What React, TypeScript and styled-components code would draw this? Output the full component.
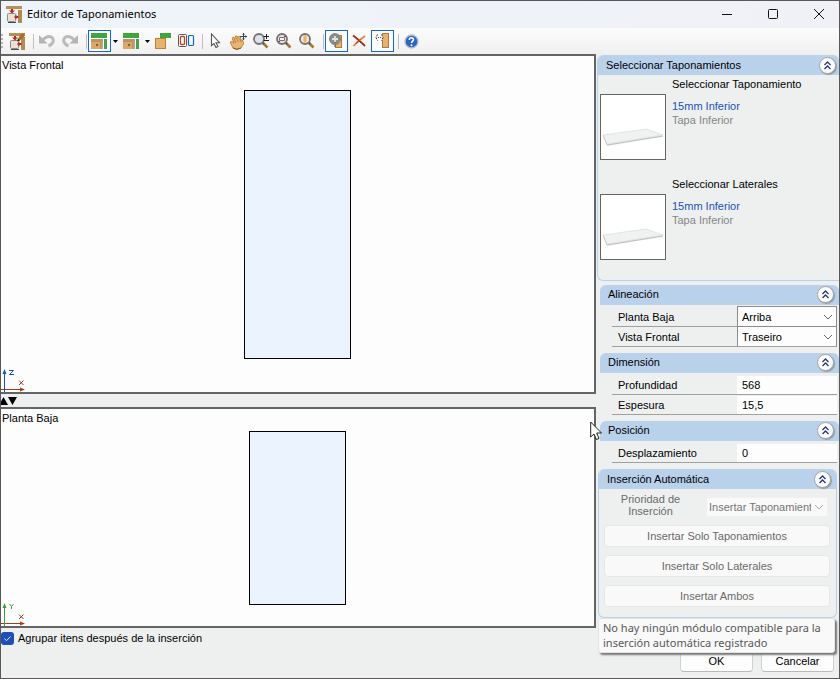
import React from 'react';
import styled, { createGlobalStyle, css } from 'styled-components';

const Global = createGlobalStyle`
  * { box-sizing: border-box; }
  html, body { margin: 0; padding: 0; }
  body, button, input, select {
    font-family: "Liberation Sans", Arial, sans-serif;
    font-size: 11px;
    line-height: 14px;
    color: #000;
  }
`;

const Window = styled.div`
  display: flex;
  flex-direction: column;
  min-height: 100vh;
  border: 1px solid #585858;
  background: #eef0f0;
  overflow: hidden;
`;

const TitleBar = styled.header`
  display: flex;
  align-items: center;
  height: 27px;
  padding: 0 0 1px 5px;
  background: linear-gradient(90deg, #eef4fb, #f0f1f7);
`;

const Title = styled.h1`
  flex: 1;
  margin: 0 0 0 5px;
  font: 400 11px/16px "Noto Sans", "Open Sans", sans-serif;
`;

const CaptionButton = styled.button`
  display: flex;
  align-items: center;
  justify-content: center;
  width: 46px;
  height: 26px;
  padding: 0;
  border: 0;
  background: none;
  &:last-child { margin-right: -3px; }
`;

const Toolbar = styled.div`
  display: flex;
  align-items: center;
  height: 26px;
  background: linear-gradient(#fcfcfc, #f0f0f0);
`;

const Grip = styled.span`
  width: 2px;
  height: 15px;
  margin-right: 2px;
  background: repeating-linear-gradient(#b4b4b4 0 2px, transparent 2px 4px);
`;

const ToolButton = styled.button<{ $active?: boolean }>`
  display: flex;
  align-items: center;
  justify-content: center;
  width: 23px;
  height: 22px;
  padding: 0;
  border: 1px solid ${p => (p.$active ? '#1467d2' : 'transparent')};
  background: ${p => (p.$active ? '#fafcff' : 'none')};
`;

const CaretButton = styled.button`
  display: flex;
  align-items: center;
  justify-content: center;
  width: 9px;
  height: 22px;
  padding: 0;
  border: 0;
  background: none;
`;

const ToolSeparator = styled.span<{ $lead?: boolean }>`
  width: 1px;
  height: 15px;
  margin: 0 1px 0 ${p => (p.$lead ? '5px' : '4px')};
  background: #bcc0c4;
`;

const Body = styled.main`
  display: flex;
  flex: 1;
`;

const Views = styled.div`
  display: flex;
  flex: 1;
  flex-direction: column;
`;

const View = styled.section<{ $grow: number }>`
  position: relative;
  display: flex;
  flex: ${p => p.$grow} 1 0;
  align-items: center;
  justify-content: center;
  padding-top: 1px;
  border: 2px solid #646464;
  border-left: 0;
  background: #fdfdfd;
`;

const ViewLabel = styled.h2`
  position: absolute;
  top: 2px;
  left: 1px;
  margin: 0;
  font-size: 11px;
  font-weight: 400;
`;

const AxisMark = styled.svg`
  position: absolute;
  bottom: 0;
  left: 0;
`;

const Splitter = styled.div`
  display: flex;
  align-items: center;
  height: 13px;
`;

const SplitButton = styled.button`
  display: flex;
  padding: 0;
  border: 0;
  background: none;
`;

const Sidebar = styled.aside`
  position: relative;
  display: flex;
  flex-direction: column;
  width: 243px;
  padding: 1px 0 0 1px;
`;

const GroupHeader = styled.header`
  display: flex;
  align-items: center;
  justify-content: space-between;
  height: 20px;
  padding: 0 5px 0 8px;
  border-radius: 6px 6px 0 0;
  background: #b9d1ea;
`;

const Group = styled.section<{ $kind: 'wide' | 'plain' | 'framed' }>`
  margin-bottom: 6px;
  ${p => p.$kind === 'wide' && css`
    height: 226px;
    margin-bottom: 4px;
    border-bottom: 1px solid #b9d1ea;
    border-left: 1px solid #b9d1ea;
    border-radius: 6px 0 0 6px;
    ${GroupHeader} { padding-right: 3px; }
  `}
  ${p => p.$kind === 'plain' && css`
    margin-left: 3px;
    ${GroupHeader} { padding-bottom: 2px; }
  `}
  ${p => p.$kind === 'framed' && css`
    margin: 0 2px 0 1px;
    border: 1px solid #b9d1ea;
    border-top: 0;
    border-radius: 6px;
  `}
`;

const GroupTitle = styled.h2`
  margin: 0;
  font-size: 11px;
  font-weight: 400;
`;

const CollapseButton = styled.button`
  display: flex;
  align-items: center;
  justify-content: center;
  width: 17px;
  height: 17px;
  padding: 0;
  border: 1px solid #a5a5a5;
  border-radius: 50%;
  background: #fdfdfd;
  box-shadow: 1px 1px 1px #8f99a5;
`;

const Material = styled.div`
  display: grid;
  grid-template-columns: 66px 1fr;
  grid-template-rows: 18px 66px;
  column-gap: 6px;
  height: 100px;
  padding-left: 2px;
`;

const MaterialTitle = styled.h3`
  grid-column: 2;
  margin: 2px 0 0;
  font-size: 11px;
  font-weight: 400;
`;

const Thumbnail = styled.button`
  display: flex;
  align-items: center;
  justify-content: center;
  margin-top: 1px;
  width: 66px;
  height: 66px;
  padding: 0;
  border: 1px solid #646464;
  background: #fff;
`;

const MaterialInfo = styled.div`
  display: flex;
  flex-direction: column;
  padding-top: 6px;
`;

const MaterialLink = styled.a`
  color: #1950c0;
  text-decoration: none;
`;

const MaterialKind = styled.span`
  color: #858585;
`;

const Rows = styled.div`
  padding: 2px 2px 0 12px;
`;

const Row = styled.div`
  display: grid;
  grid-template-columns: 1fr 100px;
  align-items: center;
  height: 20px;
  border-bottom: 1px solid #a0a0a0;
`;

const RowLabel = styled.label`
  padding: 1px 0 0 6px;
`;

const RowInput = styled.input`
  width: 100%;
  height: 18px;
  padding: 1px 5px 0;
  border: 0;
  background: #fdfdfd;
`;

const SelectBox = styled.div<{ $disabled?: boolean }>`
  display: grid;
  align-items: center;
  align-self: end;
  height: 20px;
  margin-top: -1px;
  border: 1px solid ${p => (p.$disabled ? '#f0f0f0' : '#8c8c8c')};
  border-bottom-width: ${p => (p.$disabled ? '1px' : '0')};
  background: ${p => (p.$disabled ? '#f9f9f9' : '#fdfdfd')};
  & > * { grid-area: 1 / 1; }
  & > svg { justify-self: end; margin-right: 3px; pointer-events: none; }
`;

const Select = styled.select<{ $narrow?: boolean }>`
  width: 100%;
  min-width: 0;
  height: 18px;
  padding: 0 ${p => (p.$narrow ? '16px' : '14px')} 0 ${p => (p.$narrow ? '2px' : '4px')};
  border: 0;
  appearance: none;
  background: none;
  &:disabled { color: #757575; opacity: 1; }
`;

const AutoBody = styled.div`
  display: flex;
  flex-direction: column;
  gap: 8px;
  padding: 4px 6px 10px 5px;
`;

const Priority = styled.div`
  display: grid;
  grid-template-columns: 93px 122px;
  justify-content: space-between;
  height: 24px;
  padding-right: 2px;
`;

const PriorityLabel = styled.label`
  padding: 0 12px;
  color: #6a6a6a;
  line-height: 12px;
  text-align: center;
`;

const WideButton = styled.button`
  height: 22px;
  padding: 0;
  border: 1px solid #e6e8e8;
  border-radius: 4px;
  background: #f9f9f9;
  &:disabled { color: #6a6a6a; }
`;

const Footer = styled.footer`
  position: relative;
  display: flex;
  justify-content: space-between;
  height: 50px;
  padding: 3px 5px 6px 0;
`;

const CheckLabel = styled.label`
  display: flex;
  align-items: center;
  align-self: flex-start;
  gap: 4px;
`;

const Checkbox = styled.input`
  appearance: none;
  width: 13px;
  height: 13px;
  margin: 0;
  border-radius: 3px;
  background: #1d4fb8;
  & + svg { margin-left: -17px; }
`;

const Actions = styled.div`
  display: flex;
  align-items: flex-end;
  gap: 8px;
`;

const DialogButton = styled.button`
  width: 73px;
  height: 23px;
  padding: 0;
  border: 1px solid #cfd1d1;
  border-bottom-color: #b9bbbb;
  border-radius: 4px;
  background: #fdfdfd;
`;

const Tooltip = styled.div`
  position: absolute;
  top: -10px;
  right: 4px;
  width: 237px;
  padding: 1px 4px 2px;
  border: 1px solid #e4e4e4;
  border-radius: 3px;
  background: #f9f9f9;
  box-shadow: 2px 2px 2px #777;
  color: #575757;
  font: 11px/15px "Noto Sans", "Open Sans", sans-serif;
  white-space: nowrap;
`;

const Pointer = styled.svg`
  position: absolute;
  top: 367px;
  left: -6px;
`;

const Drawing = styled.svg`
  display: block;
`;

const AppIcon = ({ pencil }: { pencil?: boolean }) => (
  <svg width="16" height="17" viewBox="0 0 16 17">
    <path d="M0 0H16V3H0z" fill="#b98f55" />
    <path d="M12 4H16V17H12z" fill="#b58a52" />
    <rect x="1.500" y="7.500" width="8" height="8" rx="1" fill="#e9e2d3" stroke="#8d8a83" />
    <path d="M2 16.500H10" stroke="#4c4a46" />
    <path d="M5 3H7V4.500H9L6 7.500L3 4.500H5z" fill="#b82a22" />
    <path d="M8 11L10.500 8.500V10H12.500V12H10.500V13.500z" fill="#b82a22" />
    {pencil && <path d="M9 6L11 2L14 0L16 2.500L13 6L10 8z" fill="#a9701f" />}
    {pencil && <path d="M8 8.500L9 5.500L11 7.500z" fill="#222" />}
  </svg>
);

const UndoIcon = ({ flip }: { flip?: boolean }) => (
  <svg width="16" height="14" viewBox="0 0 16 14">
    <g transform={flip ? 'matrix(-1 0 0 1 16 0)' : undefined}>
      <path d="M3 7C6 2.500 11 1 13.500 4C15.500 7 13.500 10.500 9.500 12" fill="none" stroke="#bababa" strokeWidth="3" />
      <path d="M0 1V9.500H8.500z" fill="#b4b4b4" />
    </g>
  </svg>
);

const CabinetIcon = () => (
  <svg width="17" height="16" viewBox="0 0 17 16">
    <path d="M0 0H16V5H0z" fill="#3fa53f" />
    <path d="M0 6H12V8H0z" fill="#b39575" />
    <path d="M10 8H12V16H10z" fill="#b9a48c" />
    <path d="M0 8H10V16H0z" fill="#dba666" />
    <path d="M0 8.500H9.500V16" fill="none" stroke="#c48f4e" />
    <rect x="5" y="11" width="2" height="2" fill="#8c5c2c" />
    <path d="M13 6H16V16H13z" fill="#49a049" />
  </svg>
);

const CornerIcon = () => (
  <svg width="17" height="16" viewBox="0 0 17 16">
    <rect x=".5" y="5.500" width="10" height="10" fill="#e5b271" stroke="#bd8035" />
    <path d="M5 0H16V5H5z" fill="#3fa53f" />
  </svg>
);

const PairIcon = () => (
  <svg width="17" height="14" viewBox="0 0 17 14" fill="none">
    <rect x=".5" y=".5" width="8" height="12" rx="1" fill="#fff" stroke="#5b5b5b" />
    <rect x="2.500" y="2.500" width="4" height="8" rx="1" stroke="#b9472b" strokeWidth="1.400" />
    <rect x="10.500" y="1.500" width="5" height="10" rx="1" fill="#f4f9ff" stroke="#1467d2" strokeWidth="1.200" />
  </svg>
);

const ArrowIcon = () => (
  <svg width="15" height="16" viewBox="0 0 15 16">
    <path d="M3.500 1V12.500L6 10.500L8 14.500L10 13.500L8 9.700H11.500z" fill="#fff" stroke="#555" strokeWidth="1.100" />
  </svg>
);

const HandIcon = () => (
  <svg width="18" height="17" viewBox="0 0 18 17">
    <path d="M1 11L0 9L2 8.500L4 10L2 5L3.500 4L5 6L5.500 3L7 3L8 5L9 3L10.500 4L11 7L13 7.500L13.500 11L11 15L7 16L3 15z" fill="#e8b672" stroke="#b57428" strokeWidth=".8" />
    <path d="M6 10L4 6M8.500 9L6.500 5M11 9L9.500 5.500" stroke="#a96822" strokeWidth=".7" />
    <path d="M3 15L7 16.500L11 15" fill="none" stroke="#8d5211" />
    <path d="M13.500 0V7M10 3.500H17" stroke="#34435c" />
    <path d="M12 1.500L13.500 0L15 1.500zM15.500 2L17 3.500L15.500 5zM12 5.500L13.500 7L15 5.500z" fill="#34435c" />
  </svg>
);

const LensIcon = ({ kind }: { kind: 'step' | 'window' | 'extents' }) => (
  <svg width="17" height="16" viewBox="0 0 17 16">
    <path d="M10 10L14.500 14.500" stroke="#a5753d" strokeWidth="2.600" />
    <path d="M9 9L11 11" stroke="#4e4e4e" strokeWidth="2" />
    <circle cx="6" cy="6" r="5" fill={kind === 'extents' ? '#f4e6d5' : '#dde4e9'} stroke="#747474" strokeWidth="1.800" />
    {kind === 'step' && <path d="M10.500 3.500H16M13.500 1V6M10.500 7.500H16" stroke="#222" />}
    {kind === 'window' && <path d="M3.500 4.500H8.500V7.500H3.500z" fill="#f4f4f4" stroke="#8b6a70" />}
    {kind === 'window' && <path d="M2 8.500H4M8 3.500H10" stroke="#c03030" />}
    {kind === 'extents' && <path d="M4.500 2.500H7.500V9.500H4.500z" fill="#efb068" />}
  </svg>
);

const InsertIcon = () => (
  <svg width="15" height="16" viewBox="0 0 15 16">
    <rect x="6.500" y="2.500" width="6" height="12" fill="#e5b271" stroke="#b57a2c" />
    <circle cx="6" cy="6" r="5.500" fill="#8b8f8b" stroke="#757875" strokeWidth=".8" />
    <path d="M6 3V9M3 6H9" stroke="#dfe4df" strokeWidth="1.800" />
    <path d="M6 14V12M6 10.500V9" stroke="#555" />
  </svg>
);

const DeleteIcon = () => (
  <svg width="15" height="14" viewBox="0 0 15 14">
    <path d="M1 1.500Q6 5 13 12" fill="none" stroke="#9a3419" strokeWidth="1.800" />
    <path d="M13 2Q7 6 1.500 12" fill="none" stroke="#e0823c" strokeWidth="1.800" />
    <path d="M4 4L9 9M8 5.500L4 9.500" stroke="#9c2b12" />
  </svg>
);

const ReplaceIcon = () => (
  <svg width="15" height="16" viewBox="0 0 15 16">
    <rect x="7.500" y=".5" width="6" height="14" fill="#e5b271" stroke="#b57a2c" />
    <circle cx="4.500" cy="4.500" r="3.500" fill="#f8f8f8" />
    <path d="M2.500 1.500L1 4.500L2.500 7.500M6.500 1.500L8 4.500L6.500 7.500" fill="none" stroke="#333" strokeDasharray="2 1" />
    <path d="M3 4.500H6" stroke="#555" strokeDasharray="1 1" />
  </svg>
);

const HelpIcon = () => (
  <svg width="15" height="15" viewBox="0 0 15 15">
    <circle cx="7.500" cy="7.500" r="6.500" fill="#2766c6" stroke="#b4bfcb" strokeWidth="1.400" />
    <path d="M5.300 6C5.300 3 9.700 3.200 9.500 5.700C9.400 7 7.500 7.200 7.500 9" fill="none" stroke="#fff" strokeWidth="1.600" />
    <circle cx="7.500" cy="11.200" r="1" fill="#fff" />
  </svg>
);

const Caret = () => (
  <CaretButton aria-label="Más opciones">
    <svg width="5" height="3" viewBox="0 0 5 3"><path d="M0 0H5L2.500 3z" /></svg>
  </CaretButton>
);

const PanelPicture = () => (
  <svg width="64" height="64" viewBox="0 0 64 64">
    <path d="M2 40L45 34L62 40L61 42L7 51L6 49z" fill="#eceded" />
    <path d="M2 40L45 34L62 40L6 49z" fill="#f0f1f1" stroke="#dcdede" strokeWidth=".7" />
    <path d="M6 50L62 41" stroke="#bfc1c1" />
    <path d="M2 40L6 50" stroke="#c8caca" />
  </svg>
);

const Axes = ({ letter, color }: { letter: string; color: string }) => (
  <AxisMark width="26" height="26" viewBox="0 0 26 26">
    <path d="M0 23.500H20" stroke="#a33b1c" />
    <path d="M19 21.500L24 23.500L19 25.500z" fill="#a33b1c" />
    <path d="M3.500 6V26" stroke={color} />
    <path d="M1.500 8L3.500 3L5.500 8z" fill={color} />
    <path d={letter === 'Z' ? 'M8 4.500H12.500L8.500 8.500H13' : 'M8.500 4L10.500 6.500V9M12.500 4L10.500 6.500'} fill="none" stroke={color} />
    <path d="M18 14.500L22.500 19M22.500 14.500L18 19" stroke="#8c3a24" />
  </AxisMark>
);

const Chevron = ({ pale }: { pale?: boolean }) => (
  <svg width="10" height="6" viewBox="0 0 10 6">
    <path d="M1 1L5 5L9 1" fill="none" stroke={pale ? '#aaa' : '#666'} />
  </svg>
);

type GroupPanelProps = { title: string; kind: 'wide' | 'plain' | 'framed'; children: React.ReactNode };

const GroupPanel = ({ title, kind, children }: GroupPanelProps) => (
  <Group $kind={kind}>
    <GroupHeader>
      <GroupTitle>{title}</GroupTitle>
      <CollapseButton aria-label={`Contraer ${title}`}>
        <svg width="9" height="9" viewBox="0 0 9 9">
          <path d="M1.500 4L4.500 1L7.500 4M1.500 8L4.500 5L7.500 8" fill="none" stroke="#24396f" strokeWidth="1.300" />
        </svg>
      </CollapseButton>
    </GroupHeader>
    {children}
  </Group>
);

const MaterialPicker = ({ title }: { title: string }) => (
  <Material>
    <MaterialTitle>{title}</MaterialTitle>
    <Thumbnail aria-label={title}><PanelPicture /></Thumbnail>
    <MaterialInfo>
      <MaterialLink href="#">15mm Inferior</MaterialLink>
      <MaterialKind>Tapa Inferior</MaterialKind>
    </MaterialInfo>
  </Material>
);

const SelectRow = ({ id, label, options }: { id: string; label: string; options: string[] }) => (
  <Row>
    <RowLabel htmlFor={id}>{label}</RowLabel>
    <SelectBox>
      <Select id={id}>{options.map(o => <option key={o}>{o}</option>)}</Select>
      <Chevron />
    </SelectBox>
  </Row>
);

const InputRow = ({ id, label, value }: { id: string; label: string; value: string }) => (
  <Row>
    <RowLabel htmlFor={id}>{label}</RowLabel>
    <RowInput id={id} type="text" defaultValue={value} />
  </Row>
);

export default function App() {
  return (
    <>
      <Global />
      <Window>
        <TitleBar>
          <AppIcon />
          <Title>Editor de Taponamientos</Title>
          <CaptionButton aria-label="Minimizar">
            <svg width="10" height="10" viewBox="0 0 10 10"><path d="M0 5.500H10" stroke="#111" /></svg>
          </CaptionButton>
          <CaptionButton aria-label="Maximizar">
            <svg width="10" height="10" viewBox="0 0 10 10"><rect x=".5" y=".5" width="9" height="9" rx="1" fill="none" stroke="#111" /></svg>
          </CaptionButton>
          <CaptionButton aria-label="Cerrar">
            <svg width="10" height="10" viewBox="0 0 10 10"><path d="M0 0L10 10M10 0L0 10" stroke="#111" /></svg>
          </CaptionButton>
        </TitleBar>

        <Toolbar>
          <Grip />
          <ToolButton aria-label="Editar"><AppIcon pencil /></ToolButton>
          <ToolSeparator $lead />
          <ToolButton aria-label="Deshacer"><UndoIcon /></ToolButton>
          <ToolButton aria-label="Rehacer"><UndoIcon flip /></ToolButton>
          <ToolSeparator $lead />
          <ToolButton aria-label="Taponamiento" $active><CabinetIcon /></ToolButton>
          <Caret />
          <ToolButton aria-label="Lateral"><CabinetIcon /></ToolButton>
          <Caret />
          <ToolButton aria-label="Esquina"><CornerIcon /></ToolButton>
          <ToolButton aria-label="Separar"><PairIcon /></ToolButton>
          <ToolSeparator />
          <ToolButton aria-label="Seleccionar"><ArrowIcon /></ToolButton>
          <ToolButton aria-label="Mover vista"><HandIcon /></ToolButton>
          <ToolButton aria-label="Zoom"><LensIcon kind="step" /></ToolButton>
          <ToolButton aria-label="Zoom ventana"><LensIcon kind="window" /></ToolButton>
          <ToolButton aria-label="Zoom extensión"><LensIcon kind="extents" /></ToolButton>
          <ToolSeparator />
          <ToolButton aria-label="Insertar" $active><InsertIcon /></ToolButton>
          <ToolButton aria-label="Eliminar"><DeleteIcon /></ToolButton>
          <ToolButton aria-label="Reemplazar" $active><ReplaceIcon /></ToolButton>
          <ToolSeparator />
          <ToolButton aria-label="Ayuda"><HelpIcon /></ToolButton>
        </Toolbar>

        <Body>
          <Views>
            <View $grow={335}>
              <ViewLabel>Vista Frontal</ViewLabel>
              <Drawing width="107" height="269" viewBox="0 0 107 269">
                <rect x=".5" y=".5" width="106" height="268" fill="#ebf3fe" stroke="#000" />
              </Drawing>
              <Axes letter="Z" color="#1950c0" />
            </View>
            <Splitter>
              <SplitButton aria-label="Subir">
                <svg width="7" height="8" viewBox="0 0 7 8"><path d="M-2 8L2.500 0L7 8z" /></svg>
              </SplitButton>
              <SplitButton aria-label="Bajar">
                <svg width="9" height="8" viewBox="0 0 9 8"><path d="M0 0H9L4.500 8z" /></svg>
              </SplitButton>
            </Splitter>
            <View $grow={216}>
              <ViewLabel>Planta Baja</ViewLabel>
              <Drawing width="97" height="174" viewBox="0 0 97 174">
                <rect x=".5" y=".5" width="96" height="173" fill="#ebf3fe" stroke="#000" />
              </Drawing>
              <Axes letter="Y" color="#3ba13b" />
            </View>
          </Views>

          <Sidebar>
            <GroupPanel title="Seleccionar Taponamientos" kind="wide">
              <MaterialPicker title="Seleccionar Taponamiento" />
              <MaterialPicker title="Seleccionar Laterales" />
            </GroupPanel>
            <GroupPanel title="Alineación" kind="plain">
              <Rows>
                <SelectRow id="planta" label="Planta Baja" options={['Arriba', 'Abajo']} />
                <SelectRow id="frontal" label="Vista Frontal" options={['Traseiro', 'Frontal']} />
              </Rows>
            </GroupPanel>
            <GroupPanel title="Dimensión" kind="plain">
              <Rows>
                <InputRow id="profundidad" label="Profundidad" value="568" />
                <InputRow id="espesura" label="Espesura" value="15,5" />
              </Rows>
            </GroupPanel>
            <GroupPanel title="Posición" kind="plain">
              <Rows>
                <InputRow id="desplazamiento" label="Desplazamiento" value="0" />
              </Rows>
            </GroupPanel>
            <GroupPanel title="Inserción Automática" kind="framed">
              <AutoBody>
                <Priority>
                  <PriorityLabel htmlFor="prioridad">Prioridad de Inserción</PriorityLabel>
                  <SelectBox $disabled>
                    <Select id="prioridad" $narrow disabled><option>Insertar Taponamientos</option></Select>
                    <Chevron pale />
                  </SelectBox>
                </Priority>
                <WideButton disabled>Insertar Solo Taponamientos</WideButton>
                <WideButton disabled>Insertar Solo Laterales</WideButton>
                <WideButton disabled>Insertar Ambos</WideButton>
              </AutoBody>
            </GroupPanel>
            <Pointer width="13" height="20" viewBox="0 0 13 20">
              <path d="M.7 1V16L4 13L6.500 18.500L9 17.500L6.700 12H11.500z" fill="#fff" stroke="#222" />
            </Pointer>
          </Sidebar>
        </Body>

        <Footer>
          <CheckLabel>
            <Checkbox type="checkbox" defaultChecked />
            <svg width="13" height="13" viewBox="0 0 13 13"><path d="M3.500 6.500L5.500 8.700L9.500 4.500" fill="none" stroke="#dbe6fb" /></svg>
            Agrupar itens después de la inserción
          </CheckLabel>
          <Actions>
            <DialogButton>OK</DialogButton>
            <DialogButton>Cancelar</DialogButton>
          </Actions>
          <Tooltip role="tooltip">No hay ningún módulo compatible para la<br />inserción automática registrado</Tooltip>
        </Footer>
      </Window>
    </>
  );
}
